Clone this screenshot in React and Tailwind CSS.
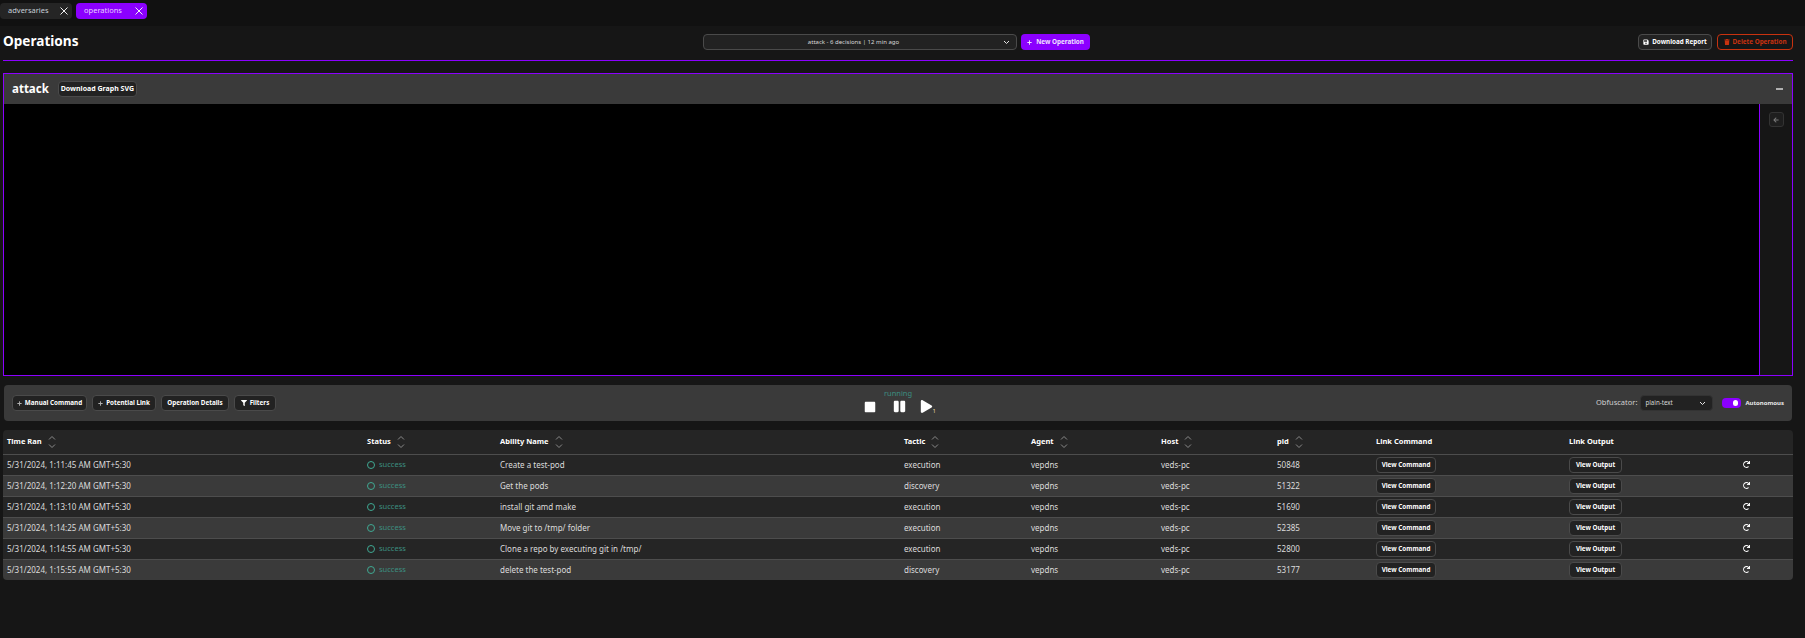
import React from "react";
import { FaPlus, FaSave, FaTrash, FaFilter, FaArrowLeft, FaRedo, FaStop, FaPause, FaPlay } from "react-icons/fa";

const rows = [
  ["5/31/2024, 1:11:45 AM GMT+5:30", "Create a test-pod", "execution", "50848"],
  ["5/31/2024, 1:12:20 AM GMT+5:30", "Get the pods", "discovery", "51322"],
  ["5/31/2024, 1:13:10 AM GMT+5:30", "install git amd make", "execution", "51690"],
  ["5/31/2024, 1:14:25 AM GMT+5:30", "Move git to /tmp/ folder", "execution", "52385"],
  ["5/31/2024, 1:14:55 AM GMT+5:30", "Clone a repo by executing git in /tmp/", "execution", "52800"],
  ["5/31/2024, 1:15:55 AM GMT+5:30", "delete the test-pod", "discovery", "53177"],
];

function Sort() {
  return (
    <svg width="8" height="14" viewBox="0 0 8 14" fill="none" stroke="#8a8a8a" strokeWidth="1" className="ml-[6px] inline-block">
      <path d="M1 4.5 L4 1.5 L7 4.5" />
      <path d="M1 9.5 L4 12.5 L7 9.5" />
    </svg>
  );
}

function Btn({ children, className = "" }) {
  return (
    <button className={"flex h-[16px] items-center justify-center gap-[3px] rounded-[4px] border border-[#4a4a4a] bg-[#222222] text-[6.3px] font-bold whitespace-nowrap text-white " + className}>
      {children}
    </button>
  );
}

function Chevron() {
  return (
    <svg width="7" height="5" viewBox="0 0 7 5" fill="none" stroke="#e5e5e5" strokeWidth="1">
      <path d="M1 1 L3.5 3.5 L6 1" />
    </svg>
  );
}

function X() {
  return (
    <svg width="8" height="8" viewBox="0 0 8 8" stroke="#f0f0f0" strokeWidth="1">
      <path d="M0.5 0.5 L7.5 7.5 M7.5 0.5 L0.5 7.5" />
    </svg>
  );
}

const thClass = "text-left align-middle text-[7.5px] font-bold text-white pl-[4px]";
const tdClass = "pl-[4px] align-middle text-[8px] text-[#dcdcdc]";

export default function App() {
  return (
    <div className="flex h-[638px] w-[1805px] flex-col overflow-hidden bg-[#161616] font-['Noto_Sans',sans-serif] text-white">
      <div className="flex h-[26px] items-start gap-[4px] bg-[#111111] pt-[3px]">
        <div className="flex h-[16px] w-[72px] items-center justify-between rounded-[4px] bg-[#252525] pl-[8px] pr-[4px] text-[7.5px] text-[#c8d0d8]">
          <span>adversaries</span>
          <X />
        </div>
        <div className="flex h-[16px] w-[71px] items-center justify-between rounded-[4px] bg-[#8b00ff] pl-[8px] pr-[4px] text-[7.5px] text-[#e8d0ff]">
          <span>operations</span>
          <X />
        </div>
      </div>

      <div className="flex flex-col pl-[3px] pr-[12px]">
        <div className="flex h-[35px] items-start border-b border-[#8b00ff] pt-[8px]">
          <h1 className="w-[700px] text-[13.6px] font-bold leading-[14px] text-white">Operations</h1>
          <div className="flex h-[16px] w-[314px] items-center rounded-[4px] border border-[#4a4a4a] bg-[#222222] pr-[6px] text-[6px] text-[#d8d8d8]">
            <span className="flex-1 text-center">attack - 6 decisions | 12 min ago</span>
            <Chevron />
          </div>
          <button className="ml-[4px] flex h-[16px] w-[69px] items-center justify-center gap-[4px] rounded-[4px] bg-[#8b00ff] text-[6.3px] font-bold whitespace-nowrap text-[#f0e0ff]">
            <FaPlus size={5} /> New Operation
          </button>
          <div className="flex-1" />
          <Btn className="w-[74px]">
            <FaSave size={6} /> Download Report
          </Btn>
          <button className="ml-[5px] flex h-[16px] w-[76px] items-center justify-center gap-[3px] rounded-[4px] border border-[#c8320f] text-[6.3px] font-bold whitespace-nowrap text-[#c8320f]">
            <FaTrash size={6} /> Delete Operation
          </button>
        </div>

        <div className="mt-[12px] flex h-[303px] flex-col border border-[#8b00ff]">
          <div className="flex h-[30px] items-center bg-[#3a3a3a] pl-[8px] pr-[9px]">
            <span className="text-[11.5px] font-bold leading-none">attack</span>
            <Btn className="ml-[9px] w-[79px] text-[7px]">Download Graph SVG</Btn>
            <div className="flex-1" />
            <div className="h-[1.5px] w-[7px] bg-[#b0b0b0]" />
          </div>
          <div className="flex flex-1">
            <div className="flex-1 bg-black" />
            <div className="flex w-[33px] justify-center border-l border-[#8b00ff] bg-[#161616] pt-[8px]">
              <div className="flex h-[15px] w-[15px] items-center justify-center rounded-[3px] border border-[#333333] bg-[#1e1e1e] text-[#7a7a7a]">
                <FaArrowLeft size={6} />
              </div>
            </div>
          </div>
        </div>

        <div className="mt-[9px] ml-[1px] mr-[1px] grid h-[36px] grid-cols-[1fr_auto_1fr] items-center rounded-[4px] bg-[#3a3a3a] pl-[8px] pr-[8px]">
          <div className="flex gap-[5px]">
            <Btn className="w-[75px]"><FaPlus size={5} className="text-[#b0b0b0]" /> Manual Command</Btn>
            <Btn className="w-[64px]"><FaPlus size={5} className="text-[#b0b0b0]" /> Potential Link</Btn>
            <Btn className="w-[68px]">Operation Details</Btn>
            <Btn className="w-[42px]"><FaFilter size={6} /> Filters</Btn>
          </div>
          <div className="mb-[5px] flex w-[66px] flex-col items-center">
            <span className="text-[7.5px] leading-[10px] text-[#3c8f80]">running</span>
            <div className="mt-[2px] flex items-center">
              <FaStop size={12} className="text-white" />
              <FaPause size={13} className="ml-[17px] text-white" />
              <span className="relative ml-[14px]">
                <FaPlay size={13} className="text-white" />
                <span className="absolute left-[13px] top-[8px] text-[6px] leading-none text-[#e8d8a0]">1</span>
              </span>
            </div>
          </div>
          <div className="flex items-center justify-end">
            <span className="mr-[3px] text-[7.5px] text-[#d0d0d0]">Obfuscator:</span>
            <div className="flex h-[16px] w-[73px] items-center justify-between rounded-[4px] border border-[#333333] bg-[#222222] pl-[4px] pr-[6px] text-[6.2px] text-[#d8d8d8]">
              <span>plain-text</span>
              <Chevron />
            </div>
            <div className="ml-[9px] flex h-[10px] w-[19px] items-center justify-end rounded-[4px] bg-[#8b00ff] pr-[3px]">
              <div className="h-[6px] w-[5px] rounded-full bg-white" />
            </div>
            <span className="ml-[4px] text-[6px] font-bold text-[#e8e8e8]">Autonomous</span>
          </div>
        </div>

        <div className="mt-[9px] overflow-hidden rounded-[4px]">
          <table className="w-[1790px] table-fixed border-collapse">
            <colgroup>
              <col className="w-[360px]" />
              <col className="w-[133px]" />
              <col className="w-[404px]" />
              <col className="w-[127px]" />
              <col className="w-[130px]" />
              <col className="w-[116px]" />
              <col className="w-[99px]" />
              <col className="w-[193px]" />
              <col className="w-[174px]" />
              <col className="w-[54px]" />
            </colgroup>
            <thead>
              <tr className="h-[24px] bg-[#252525]">
                {["Time Ran", "Status", "Ability Name", "Tactic", "Agent", "Host", "pid"].map((h) => (
                  <th key={h} className={thClass}>
                    <span className="inline-flex items-center">{h}<Sort /></span>
                  </th>
                ))}
                <th className={thClass}>Link Command</th>
                <th className={thClass}>Link Output</th>
                <th />
              </tr>
            </thead>
            <tbody>
              {rows.map((r, i) => (
                <tr key={r[3]} className={"h-[21px] border-t border-[#4d4d4d] " + (i % 2 ? "bg-[#3a3a3a]" : "bg-[#252525]")}>
                  <td className={tdClass}>{r[0]}</td>
                  <td className={tdClass}>
                    <span className="flex items-center gap-[4px] text-[7.5px] text-[#3c8f80]">
                      <span className="h-[8px] w-[8px] rounded-full border border-[#3fa892]" />
                      success
                    </span>
                  </td>
                  <td className={tdClass}>{r[1]}</td>
                  <td className={tdClass}>{r[2]}</td>
                  <td className={tdClass}>vepdns</td>
                  <td className={tdClass}>veds-pc</td>
                  <td className={tdClass}>{r[3]}</td>
                  <td className={tdClass}><Btn className="w-[60px]">View Command</Btn></td>
                  <td className={tdClass}><Btn className="w-[53px]">View Output</Btn></td>
                  <td className={tdClass}><FaRedo size={7} className="text-white" /></td>
                </tr>
              ))}
            </tbody>
          </table>
        </div>
      </div>
    </div>
  );
}
